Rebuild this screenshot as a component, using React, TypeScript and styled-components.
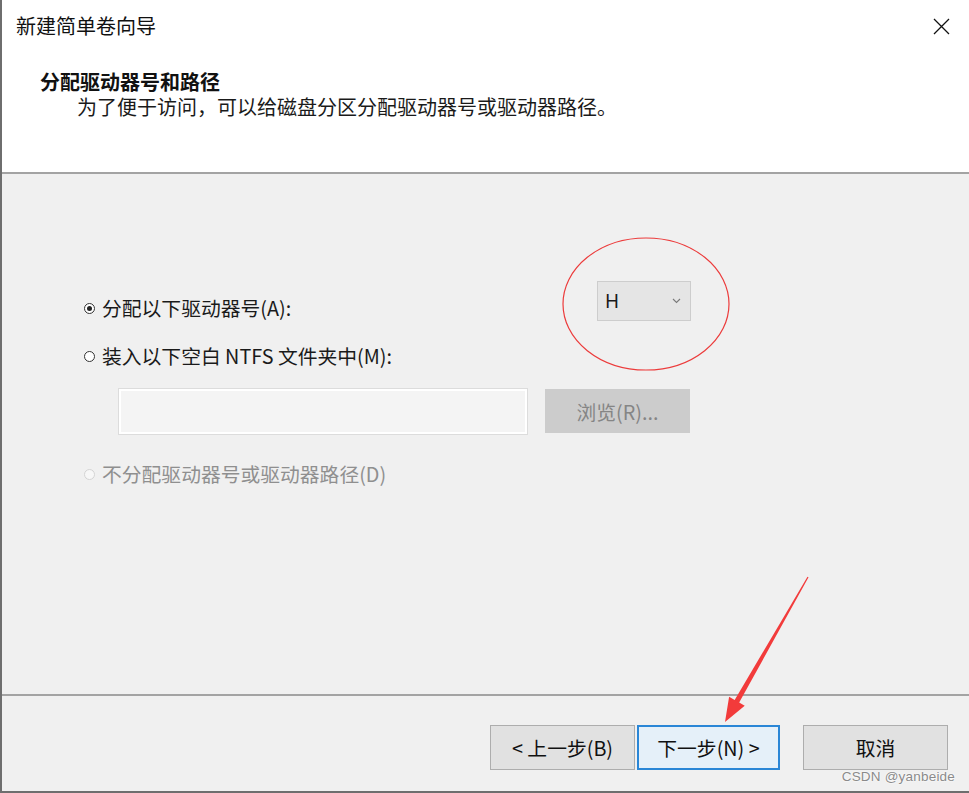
import React from "react";
import styled, { createGlobalStyle } from "styled-components";

const Global = createGlobalStyle`
  html, body { margin: 0; padding: 0; background: #f0f0f0; }
  body {
    font-family: "Noto Sans CJK SC", "Microsoft YaHei", "Noto Sans", sans-serif;
    color: #1a1a1a;
  }
  * { box-sizing: border-box; }
`;

const Window = styled.div`
  position: relative;
  width: 969px;
  height: 793px;
  display: flex;
  flex-direction: column;
  border-left: 2px solid #6e6e6e;
  border-bottom: 2px solid #6e6e6e;
  overflow: hidden;
  background: #f0f0f0;
`;

const Header = styled.header`
  height: 174px;
  background: #ffffff;
  display: flex;
  flex-direction: column;
  border-bottom: 2px solid #a3a3a3;
  flex-shrink: 0;
`;

const TitleBar = styled.div`
  height: 50px;
  display: flex;
  align-items: center;
  justify-content: space-between;
  padding: 0 19px 0 14px;
`;

const Title = styled.div`
  font-size: 20px;
  line-height: 25px;
  color: #111;
`;

const CloseButton = styled.div`
  width: 18px;
  height: 18px;
  display: flex;
  align-items: center;
  justify-content: center;
  margin-top: 2px;
`;

const HeadingBlock = styled.div`
  padding: 20px 0 0 38px;
  display: flex;
  flex-direction: column;
`;

const Heading = styled.div`
  font-size: 20px;
  line-height: 24px;
  font-weight: 700;
  color: #111;
`;

const SubHeading = styled.div`
  font-size: 20px;
  line-height: 24px;
  margin-top: 1px;
  padding-left: 37px;
  color: #1a1a1a;
`;

const Content = styled.main`
  flex: 1;
  background: #f0f0f0;
  padding: 107px 0 0 82px;
  border-bottom: 2px solid #a3a3a3;
`;

const Form = styled.div`
  width: 607px;
  display: flex;
  flex-direction: column;
`;

const FirstRow = styled.div`
  display: flex;
  justify-content: space-between;
  align-items: flex-start;
`;

const OptionLabel = styled.label<{ $disabled?: boolean; $offset?: number }>`
  display: flex;
  align-items: center;
  gap: 7px;
  font-size: 19.8px;
  line-height: 30px;
  margin-top: ${(p) => p.$offset ?? 0}px;
  color: ${(p) => (p.$disabled ? "#8f8f8f" : "#1a1a1a")};
  white-space: nowrap;
`;

const Radio = styled.span<{ $checked?: boolean; $disabled?: boolean }>`
  width: 11px;
  height: 11px;
  border-radius: 50%;
  border: 1px solid ${(p) => (p.$disabled ? "#d4d4d4" : "#333")};
  background: ${(p) => (p.$disabled ? "#f7f7f7" : "#fff")};
  display: flex;
  align-items: center;
  justify-content: center;
  flex-shrink: 0;
  &::after {
    content: "";
    width: 5px;
    height: 5px;
    border-radius: 50%;
    background: ${(p) => (p.$checked ? "#222" : "transparent")};
  }
`;

const Select = styled.div`
  width: 94px;
  height: 40px;
  background: #e5e5e5;
  border: 1px solid #cdcdcd;
  display: flex;
  align-items: center;
  justify-content: space-between;
  padding: 0 9px 0 7px;
  font-family: "Noto Sans", "Open Sans", sans-serif;
  font-size: 19px;
  color: #1a1a1a;
`;

const PathRow = styled.div`
  display: flex;
  gap: 18px;
  margin: 18px 0 0 35px;
`;

const PathInput = styled.div`
  width: 408px;
  height: 45px;
  background: #f4f4f4;
  border: 2px solid #ffffff;
  outline: 1px solid #dcdcdc;
`;

const BrowseButton = styled.div`
  width: 145px;
  height: 44px;
  background: #cccccc;
  color: #858585;
  font-size: 19.8px;
  display: flex;
  align-items: center;
  justify-content: center;
`;

const Footer = styled.footer`
  height: 95px;
  display: flex;
  justify-content: flex-end;
  align-items: flex-start;
  padding: 29px 21px 0 0;
  flex-shrink: 0;
`;

const ButtonGroup = styled.div`
  display: flex;
  gap: 2px;
  margin-right: 23px;
`;

const Button = styled.div<{ $primary?: boolean; $w: number }>`
  width: ${(p) => p.$w}px;
  height: 45px;
  display: flex;
  align-items: center;
  justify-content: center;
  font-size: 19.8px;
  color: #111;
  background: ${(p) => (p.$primary ? "#e5f0f9" : "#e1e1e1")};
  border: ${(p) => (p.$primary ? "2px solid #2a86d6" : "1px solid #adadad")};
`;

const Watermark = styled.div`
  position: absolute;
  right: 14px;
  bottom: 7px;
  font-family: "Liberation Sans", Arial, sans-serif;
  font-size: 13.5px;
  color: #8a8a8a;
  text-shadow: 0 0 2px #fff, 0 0 2px #fff;
  letter-spacing: 0.2px;
`;

const Annotations = styled.svg`
  position: absolute;
  left: -2px;
  top: 0;
  pointer-events: none;
`;

function Arrow() {
  const tail = [808, 577];
  const tip = [725, 722];
  const dx = tip[0] - tail[0];
  const dy = tip[1] - tail[1];
  const len = Math.hypot(dx, dy);
  const u = [dx / len, dy / len];
  const n = [-u[1], u[0]];
  const headLen = 24;
  const base = [tip[0] - u[0] * headLen, tip[1] - u[1] * headLen];
  const pt = (p: number[], s: number) => `${p[0] + n[0] * s},${p[1] + n[1] * s}`;
  const pts = [
    pt(tail, 0.6),
    pt(base, 2.6),
    pt(base, 9),
    `${tip[0]},${tip[1]}`,
    pt(base, -9),
    pt(base, -2.6),
    pt(tail, -0.6),
  ].join(" ");
  return <polygon points={pts} fill="#f23b3b" />;
}

export default function App() {
  return (
    <>
      <Global />
      <Window>
        <Header>
          <TitleBar>
            <Title>新建简单卷向导</Title>
            <CloseButton>
              <svg width="17" height="17" viewBox="0 0 17 17">
                <path d="M1 1 L16 16 M16 1 L1 16" stroke="#111" strokeWidth="1.3" />
              </svg>
            </CloseButton>
          </TitleBar>
          <HeadingBlock>
            <Heading>分配驱动器号和路径</Heading>
            <SubHeading>为了便于访问，可以给磁盘分区分配驱动器号或驱动器路径。</SubHeading>
          </HeadingBlock>
        </Header>
        <Content>
          <Form>
            <FirstRow>
              <OptionLabel $offset={12}>
                <Radio $checked />
                分配以下驱动器号(A):
              </OptionLabel>
              <Select>
                <span>H</span>
                <svg width="9" height="6" viewBox="0 0 9 6">
                  <path d="M1 1 L4.5 4.5 L8 1" stroke="#7a7a7a" strokeWidth="1.1" fill="none" />
                </svg>
              </Select>
            </FirstRow>
            <OptionLabel $offset={18}>
              <Radio />
              装入以下空白 NTFS 文件夹中(M):
            </OptionLabel>
            <PathRow>
              <PathInput />
              <BrowseButton>浏览(R)...</BrowseButton>
            </PathRow>
            <OptionLabel $disabled $offset={25}>
              <Radio $disabled />
              不分配驱动器号或驱动器路径(D)
            </OptionLabel>
          </Form>
        </Content>
        <Footer>
          <ButtonGroup>
            <Button $w={145}>&lt; 上一步(B)</Button>
            <Button $w={143} $primary>下一步(N) &gt;</Button>
          </ButtonGroup>
          <Button $w={145}>取消</Button>
        </Footer>
        <Watermark>CSDN @yanbeide</Watermark>
        <Annotations width="969" height="793" viewBox="0 0 969 793">
          <ellipse cx="646" cy="304" rx="83" ry="66" fill="none" stroke="#ec3b3b" strokeWidth="1.2" />
          <Arrow />
        </Annotations>
      </Window>
    </>
  );
}
